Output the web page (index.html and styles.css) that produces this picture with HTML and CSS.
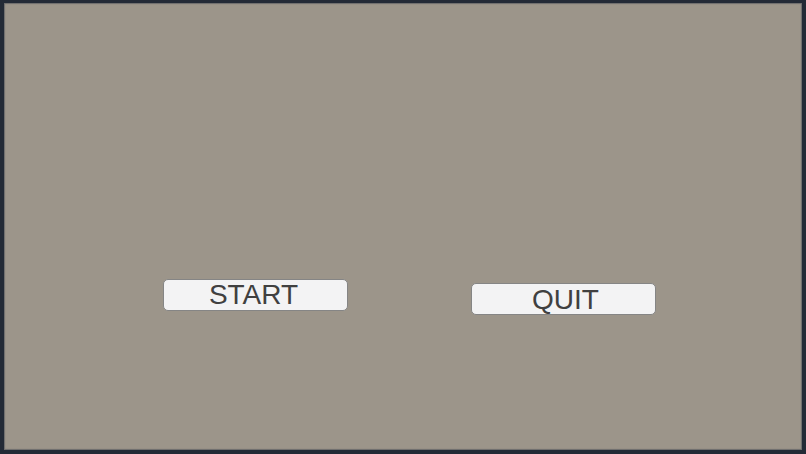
FILE: index.html
```html
<!DOCTYPE html>
<html>
<head>
<meta charset="utf-8">
<link rel="stylesheet" href="styles.css">
</head>
<body>
<div class="frame">
  <div class="panel">
    <div class="buttons">
      <button class="btn btn-start">START</button>
      <button class="btn btn-quit">QUIT</button>
    </div>
  </div>
</div>
</body>
</html>
```
FILE: styles.css
```css
html, body {
  margin: 0;
  padding: 0;
  width: 806px;
  height: 454px;
  overflow: hidden;
  background: #1e2430;
}
.frame {
  width: 806px;
  height: 454px;
  box-sizing: border-box;
  padding: 3px 4px 4px 4px;
  background: #232a36;
}
.panel {
  width: 100%;
  height: 100%;
  background: #9c958a;
  box-shadow: inset 0 0 1px 1px #6d6c6c;
  box-sizing: border-box;
  padding: 276px 0 0 159px;
}
.buttons {
  display: flex;
  align-items: flex-start;
  gap: 123px;
}
.btn {
  width: 185px;
  height: 32px;
  box-sizing: border-box;
  border: 1px solid #858585;
  border-radius: 5px;
  background: #f3f3f4;
  color: #404040;
  font-family: "Liberation Sans", Arial, sans-serif;
  font-size: 28px;
  line-height: 30px;
  padding: 0;
  text-align: center;
  margin: 0;
}
.btn-start {
  padding-right: 4px;
}
.btn-quit {
  margin-top: 4px;
  line-height: 32px;
  padding-left: 4px;
}
```
